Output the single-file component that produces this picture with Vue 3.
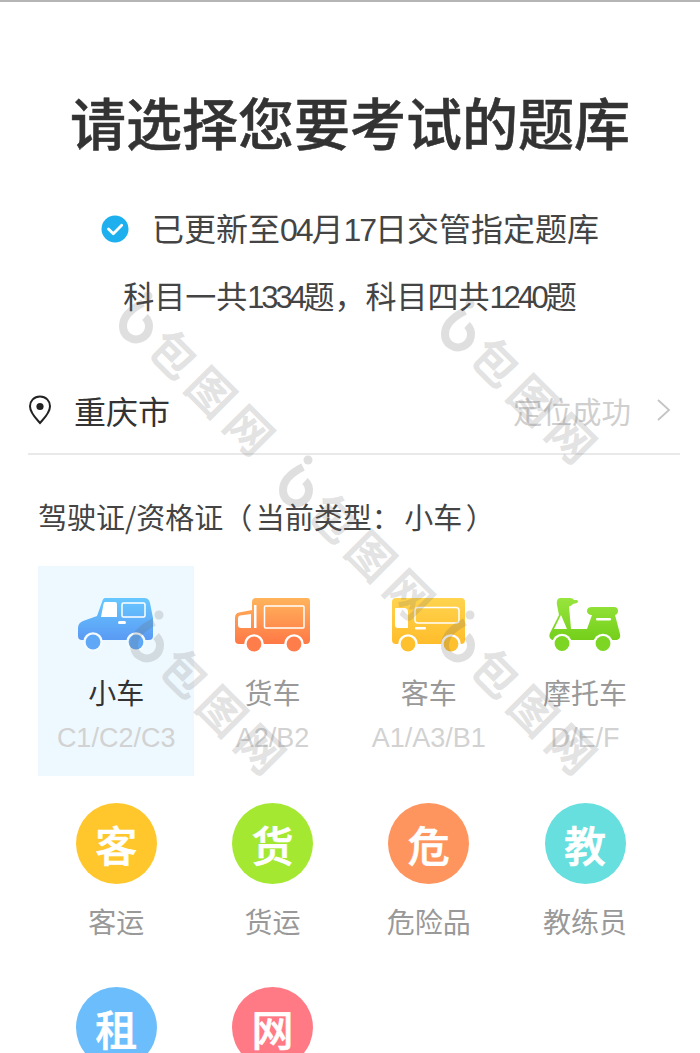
<template>
  <div class="page">
    <div class="top-line"></div>

    <h1 class="title">请选择您要考试的题库</h1>

    <div class="notice">
      <svg class="check" viewBox="0 0 28 28" width="28" height="28">
        <circle cx="14" cy="14" r="13.5" fill="#1eb0ee" />
        <path d="M7.5 14l4.8 4.8 8.4-8.6" fill="none" stroke="#fff" stroke-width="2.8" stroke-linecap="round" stroke-linejoin="round" />
      </svg>
      <span>已更新至<i class="num">04</i>月<i class="num">17</i>日交管指定题库</span>
    </div>
    <p class="count">科目一共<i class="num">1334</i>题，科目四共<i class="num">1240</i>题</p>

    <div class="location">
      <svg viewBox="0 0 24 30" width="24" height="30">
        <path d="M12 1.5C6 1.5 2 6 2 11.2 2 18 9 24.5 12 28c3-3.500 10-10 10-16.800C22 6 18 1.500 12 1.500z" fill="none" stroke="#222" stroke-width="2" />
        <circle cx="12" cy="11.500" r="3.600" fill="#222" />
      </svg>
      <span class="city">重庆市</span>
      <span class="located">定位成功</span>
      <svg class="chevron" viewBox="0 0 16 24" width="16" height="24">
        <path d="M2 2l11 10L2 22" fill="none" stroke="#c4c4c4" stroke-width="1.800" />
      </svg>
    </div>

    <div class="type-label">驾驶证/资格证（ 当前类型： 小车 ）</div>

    <div class="grid">
      <div class="cell vehicle active">
        <svg viewBox="0 0 76 54" width="76" height="54">
          <defs>
            <linearGradient id="g-car" x1="0" y1="0" x2="0" y2="1">
              <stop offset="0" stop-color="#67c8ff" />
              <stop offset="1" stop-color="#5a9af4" />
            </linearGradient>
          </defs>
          <path d="M27 0H66Q71 0 72 5L75 20V38Q75 42 71 42H4Q0 42 0 38V30Q0 25 5 23L19 18L24 4Q25 0 27 0z" fill="url(#g-car)" />
          <path d="M27 4H37Q39 4 39 6V19H23L25.500 6Q26 4 27 4z" fill="#fff" />
          <rect x="44" y="5" width="23" height="14" rx="1.500" fill="none" stroke="#fff" stroke-width="1.500" />
          <rect x="40" y="23" width="8" height="3" rx="1.500" fill="#fff" />
          <circle cx="15" cy="44" r="9.800" fill="#f4fbff" />
          <circle cx="58" cy="44" r="9.800" fill="#f4fbff" />
          <circle cx="15" cy="44" r="7.400" fill="#5fa8f7" />
          <circle cx="58" cy="44" r="7.400" fill="#5fa8f7" />
        </svg>
        <div class="name">小车</div>
        <div class="code">C1/C2/C3</div>
      </div>

      <div class="cell vehicle">
        <svg viewBox="0 0 77 54" width="77" height="54">
          <defs>
            <linearGradient id="g-truck" x1="0" y1="0" x2="0" y2="1">
              <stop offset="0" stop-color="#ffb45c" />
              <stop offset="1" stop-color="#ff7846" />
            </linearGradient>
          </defs>
          <path d="M22 0H73Q76 0 76 3V42Q76 46 72 46H5Q1 46 1 42V20Q1 15 5 14.500L18 12V4Q18 0 22 0z" fill="url(#g-truck)" />
          <path d="M4 20Q4 18 6 17.500L17 16V30H7Q4 30 4 27z" fill="#fff" />
          <rect x="20" y="7" width="2.500" height="23" fill="#fff" />
          <rect x="30.500" y="8" width="39.500" height="22" rx="1" fill="none" stroke="#fff" stroke-width="1.500" />
          <circle cx="20" cy="46" r="9.800" fill="#fff" />
          <circle cx="60" cy="46" r="9.800" fill="#fff" />
          <circle cx="20" cy="46" r="7.400" fill="#ff7d4a" />
          <circle cx="60" cy="46" r="7.400" fill="#ff7d4a" />
        </svg>
        <div class="name">货车</div>
        <div class="code">A2/B2</div>
      </div>

      <div class="cell vehicle">
        <svg viewBox="0 0 75 54" width="75" height="54">
          <defs>
            <linearGradient id="g-bus" x1="0" y1="0" x2="0" y2="1">
              <stop offset="0" stop-color="#ffd44e" />
              <stop offset="1" stop-color="#ffbd2b" />
            </linearGradient>
          </defs>
          <rect x="1" y="0" width="73" height="46" rx="4" fill="url(#g-bus)" />
          <path d="M4 10H13Q17 10 17 14V30H7Q4 30 4 27z" fill="#fff" />
          <rect x="24" y="9.500" width="44" height="15.500" rx="3" fill="none" stroke="#fff" stroke-width="1.500" />
          <rect x="24" y="29" width="11" height="2.500" rx="1" fill="#fff" />
          <circle cx="17" cy="46" r="9.800" fill="#fff" />
          <circle cx="60" cy="46" r="9.800" fill="#fff" />
          <circle cx="17" cy="46" r="7.400" fill="#ffc02e" />
          <circle cx="60" cy="46" r="7.400" fill="#ffc02e" />
        </svg>
        <div class="name">客车</div>
        <div class="code">A1/A3/B1</div>
      </div>

      <div class="cell vehicle">
        <svg viewBox="0 0 72 54" width="72" height="54">
          <defs>
            <linearGradient id="g-moto" x1="0" y1="0" x2="0" y2="1">
              <stop offset="0" stop-color="#98e53d" />
              <stop offset="1" stop-color="#74cf1a" />
            </linearGradient>
          </defs>
          <path d="M11 0H21Q24 0 25 2H28Q30 3.500 28 5L24 6Q22 8 20 8.500L22 31H38L43 17H42Q38 16 38 13Q38 9 43 9H65Q69 9 69 13Q69 16 66 17L71 36Q72 41 68 42H3Q-1 40 1 35L10 17L8 7Q7 1 11 0z" fill="url(#g-moto)" />
          <path d="M12 17L18 31H5z" fill="#fff" />
          <rect x="47" y="20" width="15" height="2.500" rx="1" fill="#fff" />
          <circle cx="13" cy="45.500" r="9.800" fill="#fff" />
          <circle cx="54" cy="45.500" r="9.800" fill="#fff" />
          <circle cx="13" cy="45.500" r="7.400" fill="#7dd524" />
          <circle cx="54" cy="45.500" r="7.400" fill="#7dd524" />
        </svg>
        <div class="name">摩托车</div>
        <div class="code">D/E/F</div>
      </div>

      <div v-for="item in certs" :key="item.word" class="cell cert">
        <div class="badge" :style="{ background: item.color }">{{ item.word }}</div>
        <div v-if="item.name" class="name">{{ item.name }}</div>
      </div>
    </div>

    <!-- 水印 -->
    <div v-for="(m, i) in marks" :key="i" class="mark" :style="{ left: m.x + 'px', top: m.y + 'px' }">
      <svg class="mark-logo" viewBox="-25 -35 50 60" width="50" height="60">
        <path d="M7-20C-3-15-13-8-13 3A13 13 0 1 0 9-6" fill="none" stroke="#666" stroke-width="8" />
        <circle cx="12" cy="-27" r="4.500" fill="#666" />
      </svg>
      <div class="mark-text"><span>包</span><span>图</span><span>网</span></div>
    </div>
  </div>
</template>

<script setup>
const certs = [
  { word: '客', name: '客运', color: '#ffc72c' },
  { word: '货', name: '货运', color: '#a4e832' },
  { word: '危', name: '危险品', color: '#ff955e' },
  { word: '教', name: '教练员', color: '#66dfde' },
  { word: '租', name: '', color: '#6cbdfb' },
  { word: '网', name: '', color: '#ff7a85' }
]

const marks = [
  { x: 136, y: 323 },
  { x: 458, y: 331 },
  { x: 296, y: 487 },
  { x: 147, y: 642 },
  { x: 458, y: 642 }
]
</script>

<style>
html,
body {
  margin: 0;
  background: #fff;
  overflow: hidden;
}
</style>

<style scoped>
.page {
  position: relative;
  width: 700px;
  height: 1053px;
  overflow: hidden;
  background: #fff;
  color: #333;
  font-family: "Noto Sans CJK SC", "Liberation Sans", sans-serif;
}

.top-line {
  height: 2px;
  background: #b5b5b5;
}

.title {
  margin: 80px 0 0;
  font-size: 56px;
  line-height: 78px;
  font-weight: 500;
  text-align: center;
  color: #333;
  -webkit-text-stroke: 0.5px #333;
}

.num {
  font-style: normal;
  font-family: "Liberation Sans", sans-serif;
  letter-spacing: -2px;
}

.notice {
  display: flex;
  align-items: center;
  justify-content: center;
  gap: 23px;
  margin-top: 37px;
  font-size: 32px;
  line-height: 60px;
  color: #444;
}

.check {
  flex-shrink: 0;
}

.count {
  margin: 5px 0 0;
  font-size: 31px;
  line-height: 60px;
  text-align: center;
  color: #444;
}

.count .num {
  letter-spacing: -3.200px;
}

.location {
  display: flex;
  align-items: center;
  height: 86px;
  margin: 39px 20px 0 28px;
  padding-right: 8px;
  border-bottom: 2px solid #e9e9e9;
}

.city {
  margin-left: 22px;
  font-size: 32px;
}

.located {
  margin-left: auto;
  font-size: 29.500px;
  color: #cfcfcf;
}

.chevron {
  margin-left: 25px;
}

.type-label {
  margin: 40px 0 0 38px;
  font-size: 29px;
  line-height: 42px;
  word-spacing: -3px;
  color: #444;
}

.grid {
  display: grid;
  grid-template-columns: repeat(4, 156.300px);
  margin: 29px 0 0 38px;
}

.cell {
  display: flex;
  flex-direction: column;
  align-items: center;
  text-align: center;
}

.vehicle {
  height: 210px;
  padding-top: 32px;
  box-sizing: border-box;
  color: #999;
}

.vehicle.active {
  background: #eef9ff;
  color: #333;
}

.vehicle .name {
  margin-top: 19px;
  font-size: 28px;
  line-height: 42px;
}

.code {
  margin-top: 4px;
  font-family: "Liberation Sans", sans-serif;
  font-size: 27px;
  line-height: 42px;
  color: #d2d2d2;
}

.cert {
  height: 184px;
  padding-top: 27px;
  box-sizing: border-box;
  color: #999;
}

.badge {
  width: 81px;
  height: 81px;
  border-radius: 50%;
  color: #fff;
  font-size: 42px;
  font-weight: 500;
  line-height: 81px;
  -webkit-text-stroke: 0.6px #fff;
}

.cert .name {
  margin-top: 16px;
  font-size: 28px;
  line-height: 42px;
}

.mark {
  position: absolute;
  width: 0;
  height: 0;
  pointer-events: none;
}

.mark-logo {
  position: absolute;
  left: -25px;
  top: -35px;
  opacity: 0.2;
}

.mark-text {
  position: absolute;
  left: 0;
  top: 0;
  display: flex;
  gap: 8px;
  padding-left: 28px;
  transform: translate(3px, -31px) rotate(45deg);
  transform-origin: 0 24px;
  font-size: 46px;
  line-height: 48px;
  font-weight: 700;
  white-space: nowrap;
  color: rgba(110, 110, 110, 0.2);
}
</style>
